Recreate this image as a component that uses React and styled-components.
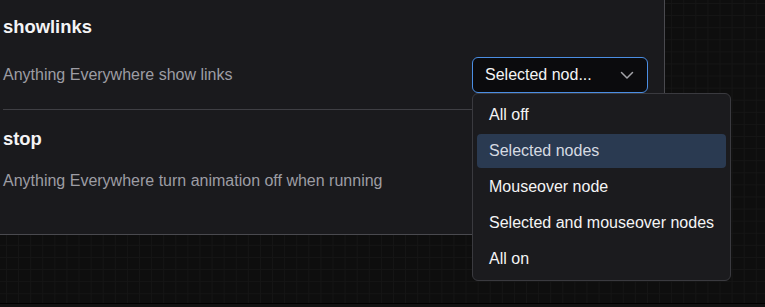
import React from "react";
import styled, { createGlobalStyle } from "styled-components";

const Global = createGlobalStyle`
  html, body { margin: 0; padding: 0; }
  body {
    width: 765px;
    height: 307px;
    overflow: hidden;
    background-color: #0e0e0e;
    background-image:
      linear-gradient(to right, #151515 1px, transparent 1px),
      linear-gradient(to bottom, #151515 1px, transparent 1px);
    background-size: 12.1px 12.1px;
    background-position: 6px 3px;
    font-family: "Liberation Sans", Arial, sans-serif;
  }
`;

const Page = styled.div`
  width: 765px;
  height: 307px;
  display: flex;
  flex-direction: column;
`;

const Panel = styled.div`
  width: 665px;
  height: 235px;
  box-sizing: border-box;
  background: #1a1a1d;
  border-right: 1px solid #4a4a4f;
  border-bottom: 1px solid #4a4a4f;
  padding: 0 16px 0 3px;
`;

const Section = styled.section`
  padding-top: ${(p) => p.$pt}px;
  padding-bottom: ${(p) => p.$pb}px;
  border-bottom: ${(p) => (p.$divider ? "1px solid #3f3f44" : "none")};
`;

const Title = styled.h3`
  margin: 0;
  font-size: 18.4px;
  line-height: 21px;
  font-weight: 700;
  color: #f4f4f5;
`;

const Row = styled.div`
  margin-top: ${(p) => p.$mt}px;
  display: flex;
  align-items: center;
  justify-content: space-between;
  min-height: ${(p) => p.$minH || 0}px;
`;

const Desc = styled.span`
  font-size: 16px;
  color: #9d9da4;
`;

const SelectWrap = styled.div`
  position: relative;
  width: 176px;
`;

const SelectButton = styled.button`
  width: 176px;
  height: 36px;
  box-sizing: border-box;
  display: flex;
  align-items: center;
  justify-content: space-between;
  padding: 0 12px 0 12px;
  background: #0b0b0d;
  border: 1px solid #4b8ee3;
  border-radius: 6px;
  color: #f4f4f5;
  font-family: "Liberation Sans", Arial, sans-serif;
  font-size: 16px;
  cursor: pointer;
`;

const Chevron = styled.svg`
  width: 16px;
  height: 16px;
  flex: none;
`;

const Menu = styled.ul`
  position: absolute;
  top: 100%;
  left: 0;
  width: 259px;
  box-sizing: border-box;
  margin: 0;
  padding: 4px;
  list-style: none;
  display: flex;
  flex-direction: column;
  gap: 2px;
  background: #1b1b1e;
  border: 1px solid #3a3a3f;
  border-radius: 6px;
  z-index: 10;
`;

const Item = styled.li`
  height: 34px;
  display: flex;
  align-items: center;
  padding-left: 12px;
  border-radius: 4px;
  font-size: 16px;
  color: ${(p) => (p.$active ? "#d6dae2" : "#f4f4f5")};
  background: ${(p) => (p.$active ? "#2a3a51" : "transparent")};
`;

const Spacer = styled.div`
  flex: 1;
`;

const BottomEdge = styled.div`
  height: 3px;
  border-top: 1px solid #000;
  background: #121212;
`;

const options = [
  "All off",
  "Selected nodes",
  "Mouseover node",
  "Selected and mouseover nodes",
  "All on",
];

export default function App() {
  return (
    <>
      <Global />
      <Page>
        <Panel>
          <Section $pt={16} $pb={16} $divider>
            <Title>showlinks</Title>
            <Row $mt={20} $minH={36}>
              <Desc>Anything Everywhere show links</Desc>
              <SelectWrap>
                <SelectButton>
                  <span>Selected nod...</span>
                  <Chevron viewBox="0 0 16 16" fill="none">
                    <path
                      d="M2.5 5.5 L8 11 L13.5 5.5"
                      stroke="#a3a3a8"
                      strokeWidth="1.5"
                      strokeLinecap="round"
                      strokeLinejoin="round"
                    />
                  </Chevron>
                </SelectButton>
                <Menu>
                  {options.map((o) => (
                    <Item key={o} $active={o === "Selected nodes"}>
                      {o}
                    </Item>
                  ))}
                </Menu>
              </SelectWrap>
            </Row>
          </Section>
          <Section $pt={18} $pb={0}>
            <Title>stop</Title>
            <Row $mt={23}>
              <Desc>Anything Everywhere turn animation off when running</Desc>
            </Row>
          </Section>
        </Panel>
        <Spacer />
        <BottomEdge />
      </Page>
    </>
  );
}
